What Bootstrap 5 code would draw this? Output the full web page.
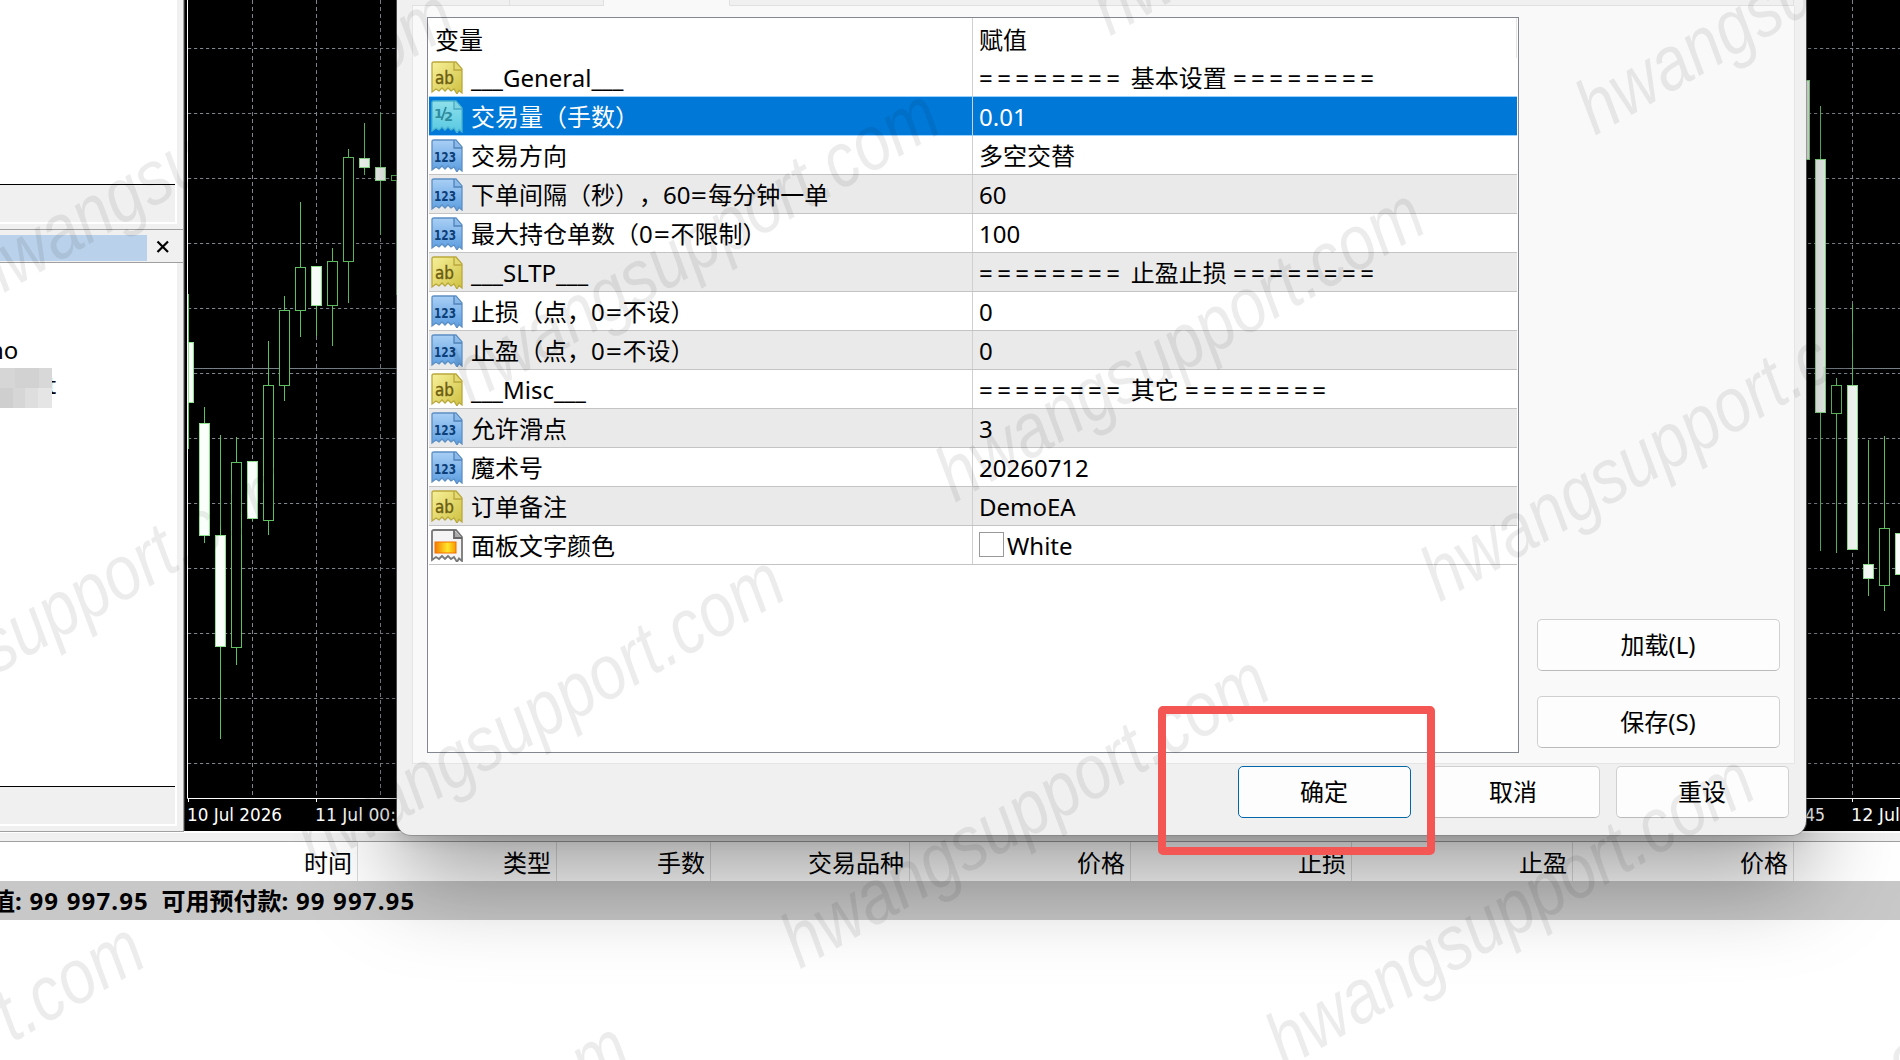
<!DOCTYPE html>
<html lang="zh-CN">
<head>
<meta charset="utf-8">
<title>EA 参数设置</title>
<link rel="stylesheet" href="https://cdn.jsdelivr.net/npm/bootstrap@5.3.0/dist/css/bootstrap.min.css">
<style>
body{width:1900px;height:1060px;overflow:hidden;background:#fff;color:#000;font:24px/36px "Noto Sans","Noto Sans CJK SC",sans-serif;text-spacing-trim:space-all}
.desk{width:1900px;height:1060px}
.upper{height:832px}
.side{width:184px;background:#f0f0f0;border-bottom:1px solid #a0a0a0;border-right:1px solid #a0a0a0}
.side-in{width:177px;border-right:2px solid #fff;border-bottom:2px solid #fff}
.paper{background:#fff;border-bottom:1px solid #000;width:175px}
.titlebar{height:34px;border-top:1px solid #a0a0a0;border-bottom:1px solid #a0a0a0;padding-top:5px}
.titlebar i{display:block;width:147px;height:26px;background:#b9d1ea}
.mosaic{width:52px;height:40px;left:0;top:105px;background:linear-gradient(90deg,#d6d6d6 0 28%,#d2d2d2 28% 75%,#d8d8d8 75%)}
.mosaic::after{content:"";position:absolute;left:0;right:0;bottom:0;height:20px;background:linear-gradient(90deg,#cfcfcf 0 25%,#d6d6d6 25% 48%,#dedede 48% 73%,#e5e5e5 73%)}
.term{height:228px;background:#fff}
.gap-strip{height:10px;background:#f0f0f0;border-top:1px solid #fff;border-bottom:1px solid #a0a0a0}
.heads{height:39px}
.heads div{border-right:1px solid #dcdcdc;text-align:right;padding-right:5px;line-height:42px;flex:none}
.sum{height:39px;background:#c8c8c8;font-weight:700;line-height:40px;white-space:pre;text-indent:-9px}
.num{letter-spacing:1.15px;margin-left:1.5px}
.dlg{left:397px;top:-40px;width:1409px;height:875px;background:#f0f0f0;border-radius:0 0 14px 14px;padding:40px 12px 17px 15px;
 box-shadow:0 0 0 1px rgba(125,125,125,.6),0 2px 18px rgba(0,0,0,.15),0 44px 94px rgba(0,0,0,.37)}
.tabs{height:6px}
.tabs div{border-bottom:1px solid #e0e0e0;border-right:1px solid #e0e0e0}
.tabs .on{background:#f9f9f9;border-bottom-color:#f9f9f9}
.pane{width:1383px;height:758px;background:#f9f9f9;border:solid #e5e5e5;border-width:0 1px 1px;padding:11px 14px 0 14px}
.grid-box{width:1092px;height:736px;background:#fff;border:1px solid #828790;padding:0 1px}
.hrow{height:40px}
.prow{height:39px;border-bottom:1px solid #c4c4c4}
.prow:nth-child(odd){background:#eaeaea}
.prow.sel{background:#0078d7;color:#fff;border-color:#99d1ff}
.prow.first{background:#fff;border-color:#99d1ff}
.cn{width:544px;height:38px;border-right:1px solid #d0d0d0;padding-left:1px;line-height:40px;white-space:pre;flex:none}
.cv{height:38px;padding-left:6px;line-height:40px;white-space:pre}
.hrow .cn{height:40px;padding-left:6px;line-height:43px}.hrow .cv{height:40px;line-height:43px}
.hrow .cv{flex:1;border-right:1px solid #e5e5e5}
.cn svg{width:34px;height:34px;margin:2px 7px 0 0;flex:none}
.eq{letter-spacing:4.450px}
.weq{display:inline-block;transform:scaleX(1.18);margin:0 2px}
.swatch{width:25px;height:25px;border:1px solid #999;background:#fff;margin:6px 3px 0 0}
.wbtn{height:52px;width:173px;border:1px solid #d0d0d0;border-bottom-color:#bbb;border-radius:5px;background:#fdfdfd;font-size:24px;line-height:38px;color:#000;padding:4px 1px 4px 0}
.wbtn.wide{width:243px}
.wbtn.ok{border-color:#0067a8}
.red{left:1158px;top:706px;width:277px;height:149px;border:8px solid #f45653;border-radius:5px}
.wm{left:0;top:0;pointer-events:none}
</style>
<script src="https://cdn.jsdelivr.net/npm/bootstrap@5.3.0/dist/js/bootstrap.bundle.min.js"></script>
</head>
<body>
<svg width="0" height="0" class="position-absolute">
<defs>
<linearGradient id="gy" x1="0" y1="0" x2="1" y2="1"><stop offset="0" stop-color="#f7f09a"/><stop offset="1" stop-color="#cfc142"/></linearGradient>
<linearGradient id="gb" x1="0" y1="0" x2="0" y2="1"><stop offset="0" stop-color="#a9cff5"/><stop offset="1" stop-color="#5a9de0"/></linearGradient>
<linearGradient id="gc" x1="0" y1="0" x2="0" y2="1"><stop offset="0" stop-color="#8fe0ea"/><stop offset="1" stop-color="#56c8e2"/></linearGradient>
<linearGradient id="go"><stop offset="0" stop-color="#f57c00"/><stop offset=".6" stop-color="#ffe62a"/><stop offset="1" stop-color="#f79a00"/></linearGradient>
<path id="sheet" d="M2 3.5Q2 2 4 2H26L32 9V33L29 30.500L27 34L24 29L21 31L18 28L15 31L12 28L9 31L6 29L2 32Z"/>
<symbol id="ab" viewBox="0 0 34 34"><use href="#sheet" fill="url(#gy)" stroke="#b9a83c" stroke-width="1.3"/><path d="M24 2V10H32" fill="#e4da74" stroke="#b9a83c" stroke-width="1.3"/><text x="5" y="24" font-family="DejaVu Sans" font-size="18" textLength="19" lengthAdjust="spacingAndGlyphs" fill="#6b5c10" stroke="#6b5c10" stroke-width=".4">ab</text></symbol>
<symbol id="n123" viewBox="0 0 34 34"><use href="#sheet" fill="url(#gb)" stroke="#5c8fc4" stroke-width="1.3"/><path d="M24 2V10H32" fill="#8bb9ea" stroke="#4f82b8" stroke-width="1.3"/><text x="4" y="23.500" font-family="DejaVu Sans" font-weight="700" font-size="14" textLength="22" lengthAdjust="spacingAndGlyphs" fill="#0d3f78">123</text></symbol>
<symbol id="half" viewBox="0 0 34 34"><use href="#sheet" fill="url(#gc)" stroke="#4bb4d0" stroke-width="1.3"/><path d="M24 2V10H32" fill="#7fd3e0" stroke="#45a9c4" stroke-width="1.3"/><text x="4" y="19" font-family="DejaVu Sans" font-weight="700" font-size="13" fill="#2f8c9e">1</text><path d="M11.500 21L16 8" stroke="#2f8c9e" stroke-width="1.800"/><text x="14" y="21.500" font-family="DejaVu Sans" font-weight="700" font-size="13" fill="#2f8c9e">2</text></symbol>
<symbol id="col" viewBox="0 0 34 34"><use href="#sheet" fill="#f4f4f4" stroke="#777" stroke-width="1.8"/><path d="M24 2V10H32" fill="#aaa" stroke="#666" stroke-width="1.8"/><rect x="5" y="14" width="21" height="11" fill="url(#go)" stroke="#f07000"/></symbol>
</defs>
</svg>
<div class="desk d-flex flex-column position-relative overflow-hidden">
 <div class="upper d-flex">
  <div class="side flex-shrink-0 d-flex flex-column">
   <div class="side-in" style="height:224px"><div class="paper" style="height:185px"></div></div>
   <div style="height:5px"></div>
   <div class="titlebar d-flex"><i></i><svg width="16" height="16" viewBox="0 0 16 16" style="margin:4px 0 0 8px"><path d="M2.500 2.500L13 13M13 2.500L2.500 13" stroke="#000" stroke-width="2.200"/></svg></div>
   <div class="side-in" style="height:563px"><div class="paper position-relative overflow-hidden" style="height:524px;padding-top:69px"><div style="margin-left:-11px">no</div><div style="margin:-1px 0 0 47.500px">t</div><div class="mosaic position-absolute"></div></div></div>
  </div>
  <svg id="chart" width="1716" height="831" viewBox="184 0 1716 831" style="background:#000" class="flex-shrink-0"></svg>
 </div>
 <div class="term">
  <div class="gap-strip"></div>
  <div class="heads d-flex"><div style="width:358px">时间</div><div style="width:199px">类型</div><div style="width:154px">手数</div><div style="width:199px">交易品种</div><div style="width:221px">价格</div><div style="width:221px">止损</div><div style="width:221px">止盈</div><div style="width:221px">价格</div></div>
  <div class="sum">值: <span class="num">99 997.95</span>  可用预付款: <span class="num">99 997.95</span></div>
 </div>

 <div class="dlg position-absolute">
  <div class="tabs d-flex"><div style="width:98px"></div><div style="width:94px"></div><div class="on" style="width:126px"></div><div class="flex-fill"></div></div>
  <div class="pane d-flex justify-content-between">
   <div class="grid-box">
    <div class="hrow d-flex"><div class="cn">变量</div><div class="cv">赋值</div></div>
    <div class="prow first d-flex"><div class="cn d-flex"><svg><use href="#ab"/></svg>___General___</div><div class="cv"><span class="eq">========</span> 基本设置 <span class="eq">========</span></div></div>
    <div class="prow sel d-flex"><div class="cn d-flex"><svg><use href="#half"/></svg>交易量（手数）</div><div class="cv">0.01</div></div>
    <div class="prow d-flex bg-white"><div class="cn d-flex"><svg><use href="#n123"/></svg>交易方向</div><div class="cv">多空交替</div></div>
    <div class="prow d-flex"><div class="cn d-flex"><svg><use href="#n123"/></svg><span>下单间隔（秒</span><span>）</span><span>，60<span class="weq">=</span>每分钟一单</span></div><div class="cv">60</div></div>
    <div class="prow d-flex"><div class="cn d-flex"><svg><use href="#n123"/></svg><span>最大持仓单数（0<span class="weq">=</span>不限制）</span></div><div class="cv">100</div></div>
    <div class="prow d-flex"><div class="cn d-flex"><svg><use href="#ab"/></svg>___SLTP___</div><div class="cv"><span class="eq">========</span> 止盈止损 <span class="eq">========</span></div></div>
    <div class="prow d-flex"><div class="cn d-flex"><svg><use href="#n123"/></svg><span>止损（点，0<span class="weq">=</span>不设）</span></div><div class="cv">0</div></div>
    <div class="prow d-flex"><div class="cn d-flex"><svg><use href="#n123"/></svg><span>止盈（点，0<span class="weq">=</span>不设）</span></div><div class="cv">0</div></div>
    <div class="prow d-flex"><div class="cn d-flex"><svg><use href="#ab"/></svg>___Misc___</div><div class="cv"><span class="eq">========</span> 其它 <span class="eq">========</span></div></div>
    <div class="prow d-flex"><div class="cn d-flex"><svg><use href="#n123"/></svg>允许滑点</div><div class="cv">3</div></div>
    <div class="prow d-flex"><div class="cn d-flex"><svg><use href="#n123"/></svg>魔术号</div><div class="cv">20260712</div></div>
    <div class="prow d-flex"><div class="cn d-flex"><svg><use href="#ab"/></svg>订单备注</div><div class="cv">DemoEA</div></div>
    <div class="prow d-flex"><div class="cn d-flex"><svg><use href="#col"/></svg>面板文字颜色</div><div class="cv d-flex"><div class="swatch"></div>White</div></div>
   </div>
   <div class="d-flex flex-column justify-content-end" style="gap:25px;padding-bottom:15px"><button class="btn wbtn wide">加载(L)</button><button class="btn wbtn wide">保存(S)</button></div>
  </div>
  <div class="d-flex justify-content-end" style="gap:16px;padding:2px 5px 0 0"><button class="btn wbtn ok">确定</button><button class="btn wbtn">取消</button><button class="btn wbtn">重设</button></div>
 </div>

 <svg id="marks" class="wm position-absolute" width="1900" height="1060"></svg>
 <div class="red position-absolute"></div>
</div>
<script>
// Candle: [x, high, low, bodyTop, bodyBottom, filled]
const candles=[[188,294,449,342,402,1],[204,407,543,423,535,1],[220,435,739,535,646,1],[236,437,665,462,647,0],[252,461,521,461,518,1],[268,341,535,385,520,0],[284,296,401,310,385,0],[300,202,337,267,310,0],[316,266,336,266,305,1],[332,248,346,261,305,0],[348,149,303,157,261,0],[364,123,175,158,167,1],[380,113,235,167,180,1],[396,175,295,175,180,0],
[1804,80,160,80,159,1],[1820,106,551,159,412,1],[1836,378,553,385,413,0],[1852,304,549,385,549,1],[1868,440,596,564,578,1],[1884,436,611,528,585,0],[1900,533,690,533,574,1]];
let s='';
for(let y=48;y<790;y+=65)s+=`<path d="M188 ${y+.5}H1900" stroke="#80868e" stroke-dasharray="3.200 2.800"/>`;
for(let x=252;x<1900;x+=64)s+=`<path d="M${x+.5} 0V798" stroke="#80868e" stroke-dasharray="4 3"/>`;
s+='<path d="M188 368.500H1900" stroke="#778088"/><path d="M184.500 0V831" stroke="#333"/><path d="M187.500 0V798.500H1900" fill="none" stroke="#fff"/><path d="M188.500 798V802M316.500 798V802M1852.500 798V802" stroke="#fff"/>';
for(const [x,h,l,t,b,f] of candles){
 s+=`<path d="M${x+.5} ${h}V${l}" stroke="#5fc05f"/>`;
 const left=x===188?x:x-5;
 s+=`<rect x="${left+.5}" y="${t+.5}" width="${x+5-left}" height="${b-t}" fill="${f?'#fbfffb':'#000'}" stroke="${f?'#8ee28e':'#5fc05f'}"/>`;
}
s+='<g fill="#fff" font-family="DejaVu Sans Condensed, DejaVu Sans" font-stretch="condensed" font-size="18.500"><text x="187" y="821" textLength="95" lengthAdjust="spacingAndGlyphs">10 Jul 2026</text><text x="315" y="821" textLength="81" lengthAdjust="spacingAndGlyphs">11 Jul 00:</text><text x="1805" y="821" textLength="20" lengthAdjust="spacingAndGlyphs">45</text><text x="1851" y="821" textLength="49" lengthAdjust="spacingAndGlyphs">12 Jul</text></g>';
document.getElementById('chart').innerHTML=s;
let m='';
for(let j=-2;j<4;j++)for(let i=-3;i<4;i++){
 const x=955+485*i-155*j,y=503+99.5*i+466.5*j;
 if(x<-560||x>1900||y<-60||y>1400)continue;
 m+=`<text transform="translate(${x} ${y}) rotate(-29.900)" textLength="548" lengthAdjust="spacingAndGlyphs">hwangsupport.com</text>`;
}
document.getElementById('marks').innerHTML='<g fill="#000" fill-opacity=".075" font-family="Liberation Sans" font-style="italic" font-size="77">'+m+'</g>';
</script>
</body>
</html>
